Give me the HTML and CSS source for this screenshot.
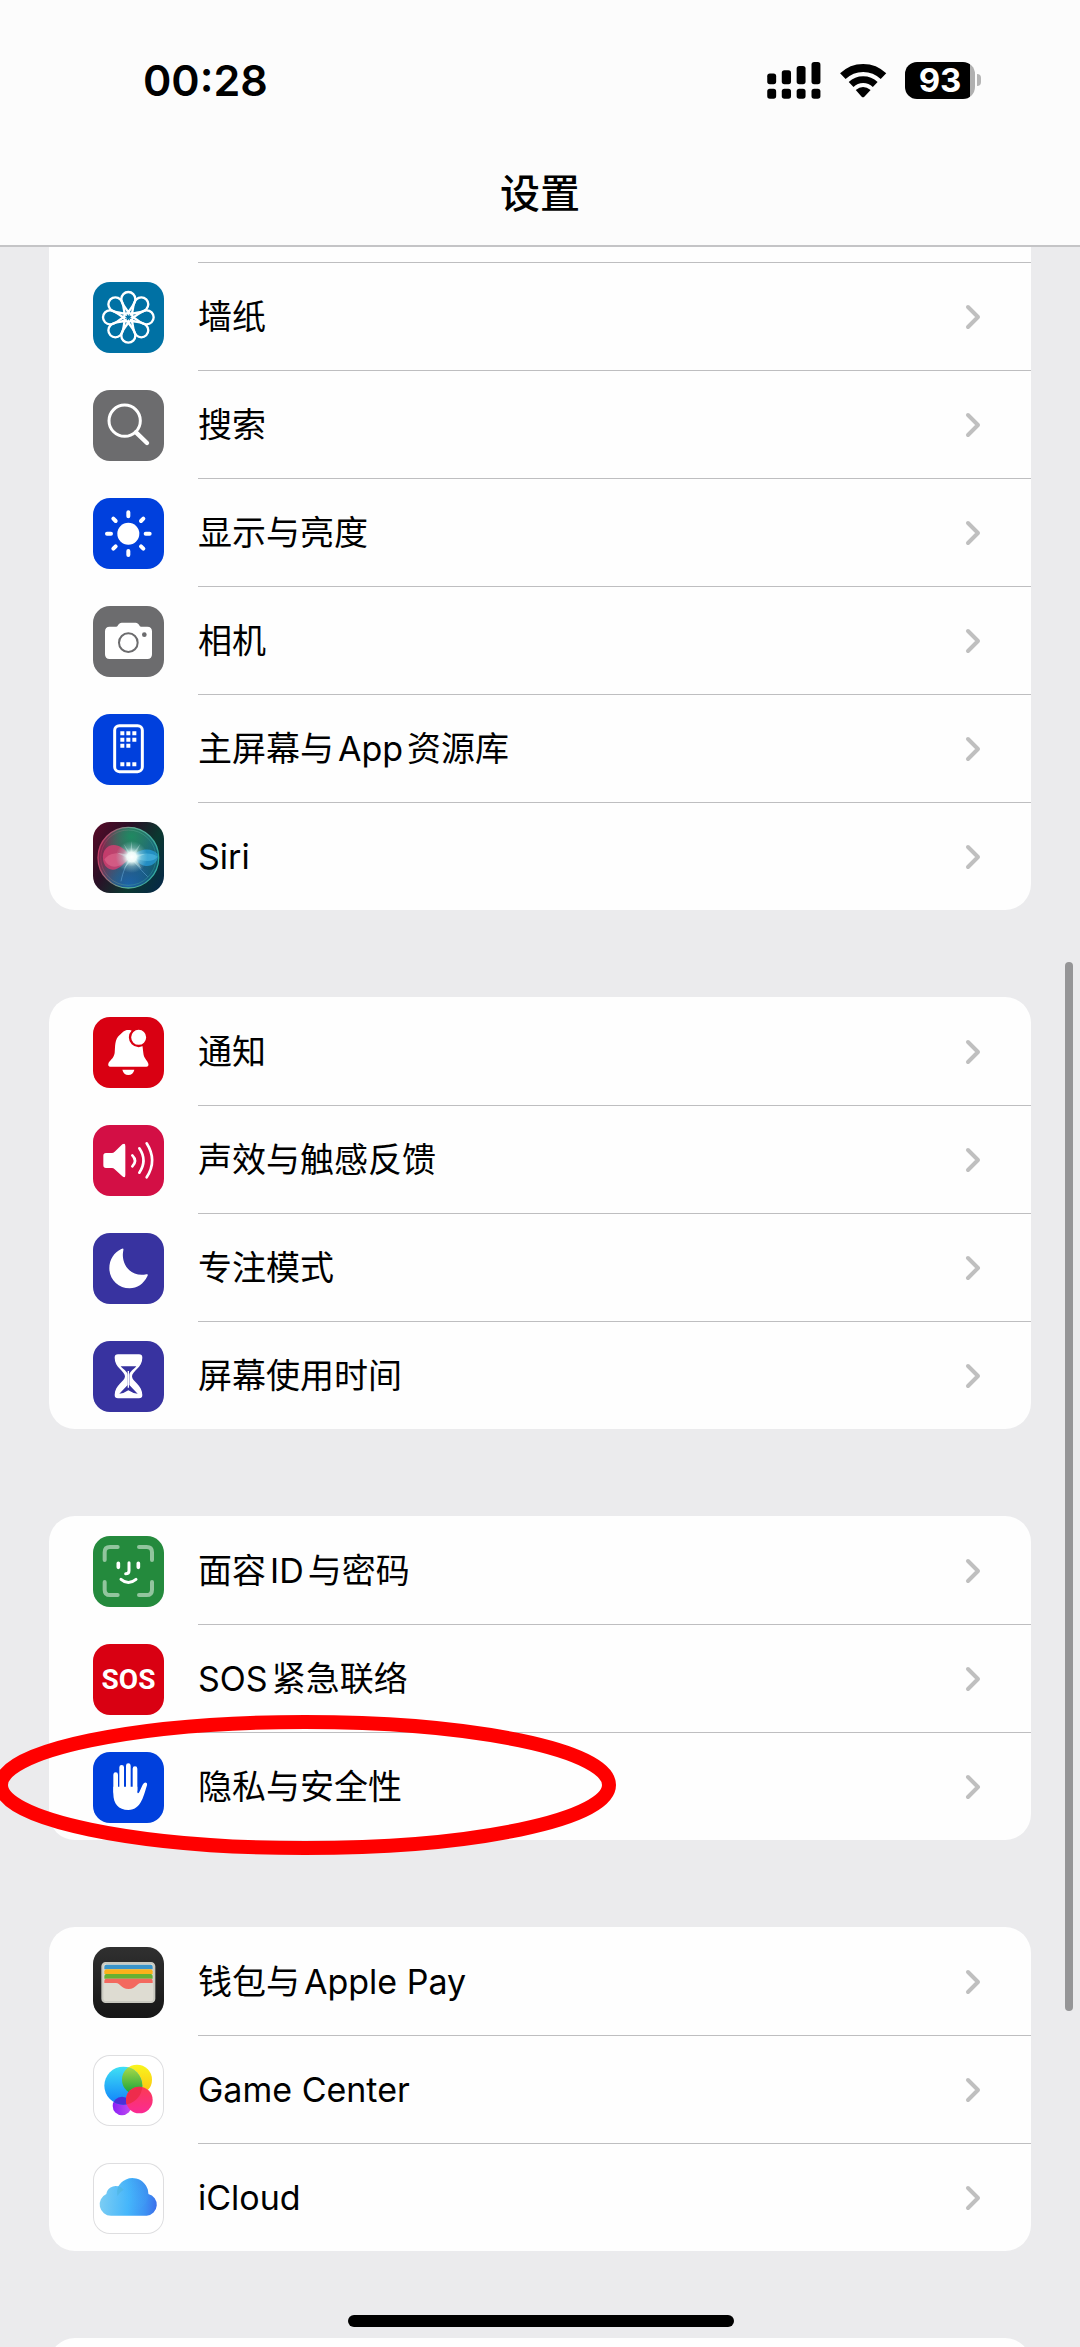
FILE: index.html
```html
<!DOCTYPE html>
<html lang="zh-CN">
<head>
    <meta charset="UTF-8">
    <meta name="viewport" content="width=device-width, initial-scale=1.0">
    <title>设置</title>
    <link rel="stylesheet" href="styles.css">
</head>
<body>

<!-- shared symbols -->
<svg class="defs" width="0" height="0" aria-hidden="true">
    <symbol id="chevron" viewBox="0 0 16 26">
        <path d="M3 3L13 13L3 23" fill="none" stroke="#bfbfbf" stroke-width="4" stroke-linecap="round" stroke-linejoin="round"/>
    </symbol>
</svg>

<header>
    <div class="status-bar">
        <span class="time">00:28</span>
        <div class="status-icons">
            <svg class="signal" viewBox="79 62 162 112">
                <rect x="79" y="97" width="27" height="32" rx="8"/>
                <rect x="123" y="87" width="28" height="42" rx="8"/>
                <rect x="168" y="74" width="27" height="55" rx="8"/>
                <rect x="213" y="62" width="27" height="67" rx="8"/>
                <rect x="79" y="143" width="27" height="30" rx="8"/>
                <rect x="123" y="143" width="28" height="30" rx="8"/>
                <rect x="168" y="143" width="27" height="30" rx="8"/>
                <rect x="213" y="143" width="27" height="30" rx="8"/>
            </svg>
            <svg class="wifi" viewBox="293 60 144 112">
                <path d="M304 103A88 88 0 0 1 427 103" fill="none" stroke="#000" stroke-width="24"/>
                <path d="M329 128A53 53 0 0 1 402 128" fill="none" stroke="#000" stroke-width="21"/>
                <path d="M343 145Q365 127 388 145L369 165Q365 169 361 165Z"/>
            </svg>
            <div class="battery"><span class="battery-level">93</span></div>
        </div>
    </div>
    <h1>设置</h1>
</header>

<main>
    <ul class="group group-first">
        <li>
            <a href="#wallpaper">
                <svg class="icon teal" viewBox="0 0 213 213">
                    <defs>
                        <path id="petal" d="M0 -14C-5 -27 -21 -38 -21 -55A21 21 0 0 1 21 -55C21 -38 5 -27 0 -14Z"/>
                    </defs>
                    <g transform="translate(106 106)" fill="none" stroke="#fff" stroke-width="7">
                        <use href="#petal"/>
                        <use href="#petal" transform="rotate(45)"/>
                        <use href="#petal" transform="rotate(90)"/>
                        <use href="#petal" transform="rotate(135)"/>
                        <use href="#petal" transform="rotate(180)"/>
                        <use href="#petal" transform="rotate(225)"/>
                        <use href="#petal" transform="rotate(270)"/>
                        <use href="#petal" transform="rotate(315)"/>
                        <circle r="13"/>
                    </g>
                </svg>
                <span class="label">墙纸</span>
                <svg class="chevron"><use href="#chevron"/></svg>
            </a>
        </li>
        <li>
            <a href="#search">
                <svg class="icon gray" viewBox="0 0 213 213">
                    <circle cx="95" cy="92" r="47" fill="none" stroke="#fff" stroke-width="9"/>
                    <path d="M129 127L162 159" stroke="#fff" stroke-width="13" stroke-linecap="round"/>
                </svg>
                <span class="label">搜索</span>
                <svg class="chevron"><use href="#chevron"/></svg>
            </a>
        </li>
        <li>
            <a href="#display">
                <svg class="icon blue" viewBox="0 0 213 213">
                    <g transform="translate(106 107)" stroke="#fff" stroke-width="12" stroke-linecap="round">
                        <circle r="33" fill="#fff" stroke="none"/>
                        <path d="M0 -64V-52M0 52V64M-64 0H-52M52 0H64M-45 -45L-38 -38M38 38L45 45M-45 45L-38 38M38 -38L45 -45"/>
                    </g>
                </svg>
                <span class="label">显示与亮度</span>
                <svg class="chevron"><use href="#chevron"/></svg>
            </a>
        </li>
        <li>
            <a href="#camera">
                <svg class="icon gray" viewBox="0 0 213 213">
                    <path fill="#fff" d="M50 62H70C75 62 76 50 86 50H128C138 50 139 62 144 62H163Q177 62 177 76V145Q177 159 163 159H50Q36 159 36 145V76Q36 62 50 62Z"/>
                    <circle cx="106" cy="110" r="28" fill="none" stroke="#6c6c6e" stroke-width="6"/>
                    <circle cx="154" cy="86" r="7" fill="#6c6c6e"/>
                </svg>
                <span class="label">相机</span>
                <svg class="chevron"><use href="#chevron"/></svg>
            </a>
        </li>
        <li>
            <a href="#home-screen">
                <svg class="icon blue" viewBox="0 0 213 213">
                    <rect x="65" y="35" width="83" height="138" rx="14" fill="none" stroke="#fff" stroke-width="9"/>
                    <path fill="#fff" d="M82 52h12v12h-12zM100 52h12v12h-12zM118 52h12v12h-12zM82 71h12v12h-12zM100 71h12v12h-12zM118 71h12v12h-12zM82 89h12v12h-12zM100 89h12v12h-12zM82 145h12v12h-12zM100 145h12v12h-12zM118 145h12v12h-12z"/>
                </svg>
                <span class="label">主屏幕与<span class="latin">App</span>资源库</span>
                <svg class="chevron"><use href="#chevron"/></svg>
            </a>
        </li>
        <li>
            <a href="#siri">
                <svg class="icon siri" viewBox="0 0 213 213">
                    <defs>
                        <linearGradient id="siriOrb" x1="0" y1="0.3" x2="1" y2="0.7">
                            <stop offset="0" stop-color="#8f1d4a"/>
                            <stop offset="0.45" stop-color="#3f5f68"/>
                            <stop offset="0.75" stop-color="#1c6480"/>
                            <stop offset="1" stop-color="#0f5a6c"/>
                        </linearGradient>
                        <linearGradient id="siriRing" x1="0" y1="0.4" x2="1" y2="0.6">
                            <stop offset="0" stop-color="#c43a64"/>
                            <stop offset="0.5" stop-color="#5fae95"/>
                            <stop offset="1" stop-color="#31a8a2"/>
                        </linearGradient>
                        <radialGradient id="siriTop" cx="0.55" cy="0.15" r="0.5">
                            <stop offset="0" stop-color="#1f8a62"/>
                            <stop offset="1" stop-color="#1f8a62" stop-opacity="0"/>
                        </radialGradient>
                        <radialGradient id="siriLow" cx="0.5" cy="0.95" r="0.5">
                            <stop offset="0" stop-color="#1c64a8"/>
                            <stop offset="1" stop-color="#1c4f98" stop-opacity="0"/>
                        </radialGradient>
                        <radialGradient id="siriGlow">
                            <stop offset="0" stop-color="#fff"/>
                            <stop offset="0.3" stop-color="#f2fffc" stop-opacity="0.95"/>
                            <stop offset="0.6" stop-color="#b8e4e6" stop-opacity="0.4"/>
                            <stop offset="1" stop-color="#9fd8dc" stop-opacity="0"/>
                        </radialGradient>
                    </defs>
                    <circle cx="106" cy="107" r="91" fill="url(#siriOrb)"/>
                    <circle cx="106" cy="107" r="91" fill="url(#siriTop)"/>
                    <circle cx="106" cy="107" r="91" fill="url(#siriLow)"/>
                    <path d="M112 104C90 70 66 64 48 72C24 84 24 124 44 138C68 154 92 128 112 104Z" fill="#d83f72" opacity="0.8"/>
                    <path d="M112 106C88 88 50 90 34 112C48 146 86 138 112 106Z" fill="#e87398" opacity="0.5"/>
                    <path d="M116 104C140 78 176 76 194 96C200 118 178 134 158 132C138 128 128 114 116 104Z" fill="#2798d4" opacity="0.8"/>
                    <path d="M120 104C144 92 176 90 194 104C180 122 148 120 120 104Z" fill="#55bfe8" opacity="0.55"/>
                    <path d="M116 106C96 132 90 150 84 178M116 106C132 132 150 150 164 164" fill="none" stroke="#62a5d4" stroke-width="3" opacity="0.6"/>
                    <path d="M124 108L162 156L136 122Z" fill="#d77f9a" opacity="0.7"/>
                    <path d="M115 58L119 94L142 66L127 98L156 96L128 108L146 142L116 115L92 142L108 110L72 92L107 98L92 66L112 94Z" fill="#e5fffb" opacity="0.4"/>
                    <circle cx="116" cy="105" r="48" fill="url(#siriGlow)"/>
                    <circle cx="106" cy="107" r="91" fill="none" stroke="url(#siriRing)" stroke-width="4"/>
                    <circle cx="106" cy="107" r="83" fill="none" stroke="url(#siriRing)" stroke-width="2" opacity="0.6"/>
                </svg>
                <span class="label">Siri</span>
                <svg class="chevron"><use href="#chevron"/></svg>
            </a>
        </li>
    </ul>

    <ul class="group">
        <li>
            <a href="#notifications">
                <svg class="icon red" viewBox="0 0 213 213">
                    <path fill="#fff" d="M52 149Q44 148 46 140C49 130 62 126 65 108C67 88 64 68 80 54C90 46 92 39 106 39C120 39 122 46 132 54C148 68 149 88 151 108C152 124 163 130 166 140Q168 148 160 149Z"/>
                    <path fill="#fff" d="M88 158H124Q120 174 106 174Q92 174 88 158Z"/>
                    <circle cx="137" cy="61" r="26" fill="#fff" stroke="#d90012" stroke-width="7"/>
                </svg>
                <span class="label">通知</span>
                <svg class="chevron"><use href="#chevron"/></svg>
            </a>
        </li>
        <li>
            <a href="#sounds">
                <svg class="icon pink" viewBox="0 0 213 213">
                    <path fill="#fff" d="M39 84H57Q61 84 65 80L88 58Q97 52 97 63V150Q97 161 88 154L65 133Q61 129 57 129H39Q31 129 31 121V92Q31 84 39 84Z"/>
                    <path fill="none" stroke="#fff" stroke-width="8" stroke-linecap="round" d="M118 91Q134 107 118 124M139 70Q164 107 139 143M161 55Q194 107 161 157"/>
                </svg>
                <span class="label">声效与触感反馈</span>
                <svg class="chevron"><use href="#chevron"/></svg>
            </a>
        </li>
        <li>
            <a href="#focus">
                <svg class="icon indigo" viewBox="0 0 213 213">
                    <path fill="#fff" d="M85 48Q93 44 91 52C82 94 114 134 160 124Q167 122 163 130C152 153 132 166 110 166C76 166 49 139 49 106C49 80 63 58 85 48Z"/>
                </svg>
                <span class="label">专注模式</span>
                <svg class="chevron"><use href="#chevron"/></svg>
            </a>
        </li>
        <li>
            <a href="#screen-time">
                <svg class="icon indigo" viewBox="0 0 213 213">
                    <path fill="#fff" d="M75 40H138Q148 40 148 50C148 80 117 90 117 106C117 122 148 132 148 162Q148 172 138 172H75Q65 172 65 162C65 132 96 122 96 106C96 90 65 80 65 50Q65 40 75 40Z"/>
                    <path fill="#3833a0" d="M83 76H130C124 84 109 92 109 102V132L134 158H79L104 132V102C104 92 89 84 83 76Z"/>
                    <path stroke="#fff" stroke-width="4" d="M106 90V140"/>
                    <path fill="#fff" d="M76 160Q92 158 106 148Q121 158 137 160V164H76Z"/>
                </svg>
                <span class="label">屏幕使用时间</span>
                <svg class="chevron"><use href="#chevron"/></svg>
            </a>
        </li>
    </ul>

    <ul class="group">
        <li>
            <a href="#face-id">
                <svg class="icon green" viewBox="0 0 213 213">
                    <path fill="none" stroke="#fff" stroke-opacity="0.5" stroke-width="12" stroke-linecap="round" d="M35 72V49Q35 33 51 33H74M138 33H161Q177 33 177 49V72M177 138V161Q177 177 161 177H138M74 177H51Q35 177 35 161V138"/>
                    <path fill="none" stroke="#fff" stroke-width="11" stroke-linecap="round" d="M76 82V94M136 82V94"/>
                    <path fill="none" stroke="#fff" stroke-width="9" stroke-linecap="round" d="M108 80V104Q108 113 98 113M84 130Q106 149 129 130"/>
                </svg>
                <span class="label">面容<span class="latin">ID</span>与密码</span>
                <svg class="chevron"><use href="#chevron"/></svg>
            </a>
        </li>
        <li>
            <a href="#sos">
                <span class="icon red icon-text">SOS</span>
                <span class="label">SOS<span class="after-latin">紧急联络</span></span>
                <svg class="chevron"><use href="#chevron"/></svg>
            </a>
        </li>
        <li>
            <a href="#privacy">
                <svg class="icon blue" viewBox="0 0 213 213">
                    <path fill="none" stroke="#fff" stroke-width="14" stroke-linecap="round" d="M68 68V120M86 46V110M106 41V110M126 50V115"/>
                    <path fill="#fff" d="M61 104H133V120Q134 128 139 120L149 98Q155 89 161 93Q163 95 162 100C153 126 146 174 106 174C76 174 61 154 61 126Z"/>
                </svg>
                <span class="label">隐私与安全性</span>
                <svg class="chevron"><use href="#chevron"/></svg>
            </a>
            <!-- red marker ring -->
            <svg class="marker" viewBox="0 0 622 140">
                <ellipse cx="311" cy="70" rx="304" ry="63" fill="none" stroke="#ff0000" stroke-width="14"/>
            </svg>
        </li>
    </ul>

    <ul class="group">
        <li>
            <a href="#wallet">
                <svg class="icon wallet" viewBox="0 0 213 213">
                    <rect x="28" y="48" width="156" height="117" rx="10" fill="#dedcd2" stroke="#c9c9c0" stroke-width="6"/>
                    <path fill="#3a94c9" d="M34 65V59Q34 53 40 53H173Q179 53 179 59V67H34Z"/>
                    <path fill="#fbb21a" d="M34 80V73Q34 67 40 67H173Q179 67 179 73V81H34Z"/>
                    <path fill="#67b132" d="M34 94V87Q34 81 40 81H173Q179 81 179 87V95H34Z"/>
                    <path fill="#f3695f" d="M34 108V101Q34 95 40 95H173Q179 95 179 101V108H144C130 108 130 126 107 126C83 126 83 108 69 108Z"/>
                </svg>
                <span class="label">钱包与<span class="latin">Apple Pay</span></span>
                <svg class="chevron"><use href="#chevron"/></svg>
            </a>
        </li>
        <li>
            <a href="#game-center">
                <svg class="icon outlined" viewBox="0 0 213 213">
                    <defs>
                        <linearGradient id="gcBlue" x1="0" y1="0" x2="0" y2="1">
                            <stop offset="0" stop-color="#3fe0f4"/>
                            <stop offset="1" stop-color="#0f80fb"/>
                        </linearGradient>
                        <linearGradient id="gcYellow" x1="0" y1="0" x2="0" y2="1">
                            <stop offset="0" stop-color="#f8f51e"/>
                            <stop offset="1" stop-color="#fdc010"/>
                        </linearGradient>
                        <linearGradient id="gcGreen" x1="0" y1="0" x2="0" y2="1">
                            <stop offset="0.1" stop-color="#a5d848"/>
                            <stop offset="1" stop-color="#10a03a"/>
                        </linearGradient>
                        <linearGradient id="gcPurple" x1="0" y1="0" x2="1" y2="0">
                            <stop offset="0" stop-color="#8920f6"/>
                            <stop offset="1" stop-color="#c44cf0"/>
                        </linearGradient>
                        <linearGradient id="gcPink" x1="0" y1="0" x2="0" y2="1">
                            <stop offset="0" stop-color="#fb3b52"/>
                            <stop offset="1" stop-color="#fb2a94"/>
                        </linearGradient>
                        <clipPath id="gcBlueClip"><circle cx="91" cy="92" r="57"/></clipPath>
                    </defs>
                    <circle cx="132" cy="74" r="45" fill="url(#gcYellow)"/>
                    <circle cx="87" cy="153" r="28" fill="url(#gcPurple)"/>
                    <circle cx="91" cy="92" r="57" fill="url(#gcBlue)"/>
                    <g clip-path="url(#gcBlueClip)">
                        <circle cx="132" cy="74" r="45" fill="url(#gcGreen)"/>
                        <circle cx="87" cy="153" r="28" fill="#4a2fd8"/>
                    </g>
                    <circle cx="139" cy="135" r="40" fill="url(#gcPink)"/>
                    <g clip-path="url(#gcBlueClip)">
                        <circle cx="139" cy="135" r="40" fill="#ee2c4c"/>
                    </g>
                </svg>
                <span class="label">Game Center</span>
                <svg class="chevron"><use href="#chevron"/></svg>
            </a>
        </li>
        <li>
            <a href="#icloud">
                <svg class="icon outlined" viewBox="0 0 213 213">
                    <defs>
                        <linearGradient id="cloud" gradientUnits="userSpaceOnUse" x1="20" y1="110" x2="193" y2="125">
                            <stop offset="0" stop-color="#7ccdf3"/>
                            <stop offset="0.5" stop-color="#45b6fb"/>
                            <stop offset="0.8" stop-color="#3d92f3"/>
                            <stop offset="1" stop-color="#3b6eea"/>
                        </linearGradient>
                        <linearGradient id="cloudTop" x1="0" y1="1" x2="1" y2="0">
                            <stop offset="0.3" stop-color="#45b6fb" stop-opacity="0"/>
                            <stop offset="1" stop-color="#3a80e6"/>
                        </linearGradient>
                    </defs>
                    <path fill="url(#cloud)" d="M54 158A34 34 0 0 1 40 93A28 28 0 0 1 76 70A48 48 0 0 1 166 93A33 33 0 0 1 161 158Z"/>
                    <circle cx="119" cy="94" r="47" fill="url(#cloudTop)" opacity="0.6"/>
                    <path fill="#4fb4de" opacity="0.6" d="M76 70Q86 72 92 80Q80 86 73 99Q70 84 76 70Z"/>
                </svg>
                <span class="label">iCloud</span>
                <svg class="chevron"><use href="#chevron"/></svg>
            </a>
        </li>
    </ul>

    <div class="group group-next"></div>
</main>

<div class="scrollbar"></div>
<div class="home-indicator"></div>

</body>
</html>
```
FILE: styles.css
```css
* {
    box-sizing: border-box;
}
body {
    display: flex;
    flex-direction: column;
    position: relative;
    height: 100vh;
    margin: 0;
    overflow: hidden;
    background-color: #ebebed;
    color: #000;
    font-family: Inter, "Noto Sans CJK SC", sans-serif;
}
.defs {
    position: absolute;
}

/* Header */
header {
    flex: none;
    background-color: #fcfcfc;
    border-bottom: 2px solid #c4c4c6;
    padding-top: 50px;
}
.status-bar {
    display: flex;
    align-items: center;
    justify-content: space-between;
    height: 60px;
    padding: 0 99px 0 143px;
}
.time {
    font-size: 43px;
    font-weight: 600;
}
.status-icons {
    display: flex;
    align-items: center;
    gap: 18px;
}
.signal {
    width: 54px;
    height: 37px;
}
.wifi {
    width: 48px;
    height: 37px;
}
.battery {
    display: flex;
    align-items: center;
    gap: 2px;
}
.battery::after {
    content: "";
    width: 4px;
    height: 12px;
    border-radius: 0 6px 6px 0;
    background-color: #b5b5b5;
}
.battery-level {
    width: 70px;
    height: 37px;
    border-radius: 12px;
    background: linear-gradient(to right, #000 65px, #b0b0b0 65px);
    color: #fff;
    font-size: 33px;
    font-weight: 700;
    line-height: 37px;
    text-align: center;
}
h1 {
    margin: 0;
    padding: 54px 0 21px;
    font-size: 40px;
    font-weight: 500;
    line-height: 60px;
    text-align: center;
}

/* Settings list */
main {
    flex: 1;
    min-height: 0;
    overflow: hidden;
}
.group {
    list-style: none;
    margin: 0 49px 87px;
    padding: 0;
    border-radius: 26px;
    background-color: #fefefe;
}
.group-first {
    border-radius: 0 0 26px 26px;
    padding-top: 15px;
}
.group-next {
    height: 108px;
}
.group li {
    position: relative;
}
.group a {
    display: flex;
    align-items: center;
    height: 108px;
    padding: 2px 50px 0 44px;
    color: #000;
    text-decoration: none;
}
.group li + li::before,
.group-first li::before {
    content: "";
    position: absolute;
    top: 0;
    right: 0;
    left: 149px;
    height: 1px;
    background-color: #bebec0;
}
.label {
    flex: 1;
    margin-left: 34px;
    font-size: 34px;
    line-height: 48px;
}
.latin {
    margin: 0 4px;
}
.after-latin {
    margin-left: 4px;
}
.chevron {
    width: 16px;
    height: 26px;
}

/* Row icons */
.icon {
    flex: none;
    width: 71px;
    height: 71px;
    border-radius: 17px;
}
.teal {
    background-color: #0071a4;
}
.gray {
    background-color: #6c6c6e;
}
.blue {
    background-color: #0040dd;
}
.red {
    background-color: #d90012;
}
.pink {
    background-color: #d30f45;
}
.indigo {
    background-color: #3833a0;
}
.green {
    background-color: #248a3d;
}
.siri {
    background: linear-gradient(120deg, #5a0a28 0%, #2a1026 35%, #0b3830 65%, #06264a 100%);
}
.wallet {
    background: linear-gradient(#303030, #161616);
}
.outlined {
    background-color: #fff;
    box-shadow: inset 0 0 0 1px #dedee0;
}
.icon-text {
    color: #fff;
    font-family: Roboto, sans-serif;
    font-size: 28px;
    font-weight: 700;
    line-height: 71px;
    text-align: center;
}

.marker {
    position: absolute;
    top: -17px;
    left: -55px;
    width: 622px;
    height: 140px;
    pointer-events: none;
}
.scrollbar {
    position: absolute;
    top: 41%;
    right: 7px;
    bottom: 336px;
    width: 8px;
    border-radius: 4px;
    background-color: #959597;
}
.home-indicator {
    position: absolute;
    bottom: 20px;
    left: 50%;
    width: 386px;
    height: 12px;
    margin-left: -192px;
    border-radius: 6px;
    background-color: #000;
}
```
